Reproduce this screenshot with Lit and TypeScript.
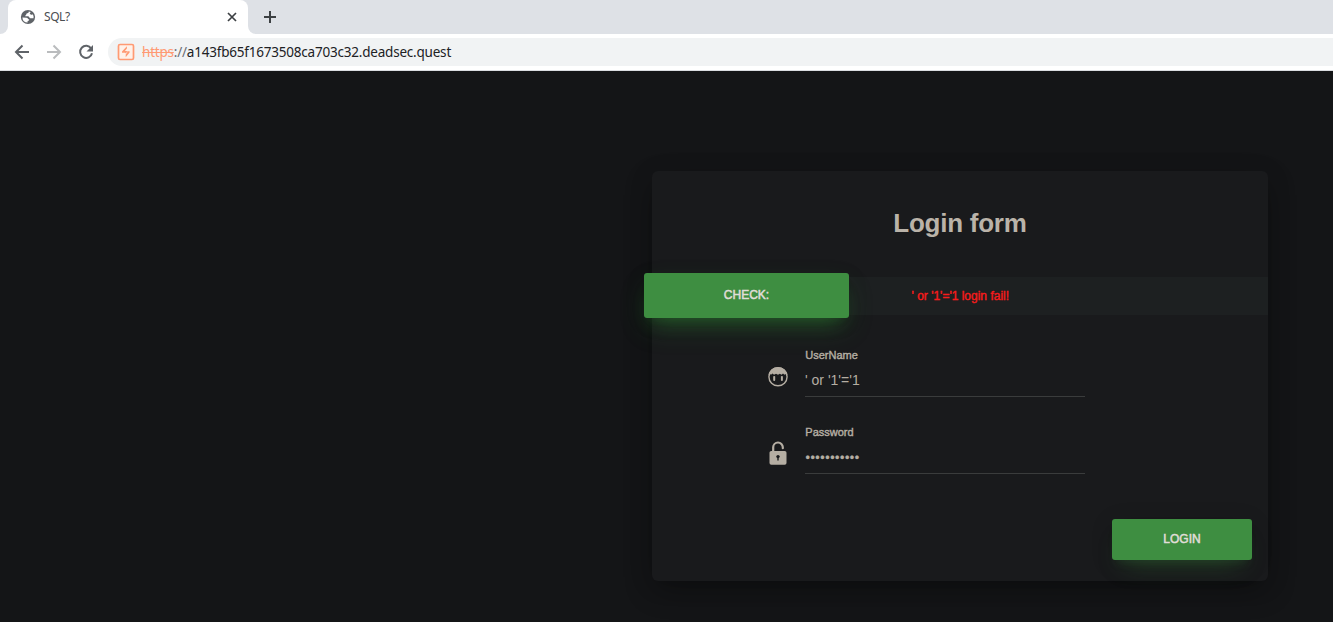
import { LitElement, html, css, svg } from "lit";
import { customElement } from "lit/decorators.js";

@customElement("browser-chrome")
class BrowserChrome extends LitElement {
  static styles = css`
    :host { display: block; height: 71px; background: #fff; box-sizing: border-box; border-bottom: 1px solid #dadce0; font-family: "Noto Sans", sans-serif; }
    .strip { height: 34px; background: #dee1e6; display: flex; align-items: flex-start; }
    .edge { width: 8px; height: 34px; background: #fff; }
    .edge i { display: block; height: 34px; background: #dee1e6; }
    .left i { border-bottom-right-radius: 8px; }
    .right i { border-bottom-left-radius: 8px; }
    .tab { width: 240px; height: 34px; box-sizing: border-box; padding: 0 10px 0 12px; display: flex; align-items: center; background: #fff; border-radius: 8px 8px 0 0; }
    .title { flex: 1; margin-left: 8px; font-size: 12px; letter-spacing: -0.45px; color: #4a4d51; line-height: 34px; }
    .plus { margin: 10px 0 0 7px; }
    .bar { height: 36px; display: flex; align-items: center; }
    .nav { display: flex; gap: 16px; padding-left: 14px; }
    .address { flex: 1; height: 28px; margin-left: 14px; background: #f1f3f4; border-radius: 14px 0 0 14px; display: flex; align-items: center; padding-left: 9px; box-sizing: border-box; }
    .url { margin-left: 7px; font-size: 13.5px; line-height: 28px; color: #202124; letter-spacing: -0.21px; white-space: pre; }
    .bad { color: #ff9a73; text-decoration: line-through; }
    .sep { color: #6a6e73; }
    svg { display: block; flex: none; }
  `;
  render() {
    return html`
      <div class="strip">
        <div class="edge left"><i></i></div>
        <div class="tab">
          <svg width="16" height="16" viewBox="0 0 16 16">
            <circle cx="8" cy="8" r="7.1" fill="#5f6368" />
            <path d="M8.8 2.5C8.800 4 7.600 4.300 6.600 4.600 6.600 6 5.200 6 5.200 7.300H8C9.200 7.300 9.300 9 10.200 9.300H13.500A5.700 5.700 0 0 0 12.800 5.200C11.500 6.300 10 5.600 9.800 4.600 9.700 3.800 10.800 3.600 10.500 3ZM2.400 8.400A5.600 5.600 0 0 0 7.600 13.600V12C9 12 9.200 11.400 9.200 10.600 8 10.600 8 9 6.600 8.800Z" fill="#fff" />
          </svg>
          <span class="title">SQL?</span>
          <svg width="12" height="12" viewBox="0 0 12 12"><path d="m2 2 8 8m0-8-8 8" stroke="#3c4043" stroke-width="1.7" /></svg>
        </div>
        <div class="edge right"><i></i></div>
        <svg class="plus" width="14" height="14" viewBox="0 0 14 14"><path d="M7 1v12M1 7h12" stroke="#3c4043" stroke-width="2" /></svg>
      </div>
      <div class="bar">
        <div class="nav">
          <svg width="16" height="16" viewBox="0 0 16 16"><path d="M15 8H2.2M8.5 1.5 2 8l6.5 6.5" fill="none" stroke="#5f6368" stroke-width="2" /></svg>
          <svg width="16" height="16" viewBox="0 0 16 16"><path d="M1 8h12.8M7.5 1.5 14 8l-6.5 6.5" fill="none" stroke="#babcbe" stroke-width="2" /></svg>
          <svg width="16" height="16" viewBox="0 0 16 16"><path d="M13.2 4.6A6 6 0 1 0 14 9.2" fill="none" stroke="#5f6368" stroke-width="2" /><path d="M15 1v6.5H8.5Z" fill="#5f6368" /></svg>
        </div>
        <div class="address">
          <svg width="18" height="18" viewBox="0 0 18 18">
            <rect x="1.5" y="1.5" width="15" height="15" rx="1.5" fill="#fff1e9" stroke="#ff9a73" stroke-width="1.7" />
            <path d="M9.900 3.200 5 8.600V9.700H8.400V10.600L9.900 9.300V8H7.900L9.900 5.400ZM8.700 14.200 12.600 9.600V8.300H10.200V9.400L8.700 11.600Z" fill="#ff9a73" />
          </svg>
          <span class="url"><span class="bad">https</span><span class="sep">://</span>a143fb65f1673508ca703c32.deadsec.quest</span>
        </div>
      </div>
    `;
  }
}

const userIcon = svg`<svg width="22" height="22" viewBox="0 0 22 22">
  <circle cx="11" cy="10.700" r="9.100" fill="none" stroke="#b5aea3" stroke-width="1.400" />
  <path d="M1.500 9.200A9.600 9.600 0 0 1 20.500 9.200L18.500 7.900 17.500 8.700 16 7.500 14.500 8.700 12.800 7.700 11 8.700 9 7.700 7 8.700 5.500 7.500 4 8.700 3.200 7.900Z" fill="#b5aea3" />
  <rect x="6.200" y="9.900" width="2" height="5" rx=".9" fill="#b5aea3" />
  <rect x="13.900" y="9.900" width="2" height="5" rx=".9" fill="#b5aea3" />
</svg>`;

const lockIcon = svg`<svg width="22" height="24" viewBox="0 0 22 24">
  <path d="M6.200 10.500V6.300a4.800 4.800 0 0 1 9.600 0V7.200" fill="none" stroke="#b5aea3" stroke-width="2.200" stroke-linecap="round" />
  <rect x="2.500" y="10" width="17" height="13.700" rx="1.800" fill="#b5aea3" />
  <circle cx="11" cy="15.600" r="1.700" fill="#191a1c" />
  <path d="M10.300 16h1.400v3.600h-1.400Z" fill="#191a1c" />
</svg>`;

@customElement("login-card")
class LoginCard extends LitElement {
  static styles = css`
    :host { display: flex; flex-direction: column; box-sizing: border-box; width: 616px; height: 410px; background: #191a1c; border-radius: 6px; box-shadow: 0 10px 30px -4px rgba(0, 0, 0, 0.35), 0 4px 25px 0 rgba(0, 0, 0, 0.12); color: #b5aea3; }
    h2 { margin: 36px 0 0; font-size: 26px; line-height: 32px; font-weight: 700; letter-spacing: -0.25px; text-align: center; color: #bab3a9; }
    .status { display: flex; align-items: flex-start; height: 38px; margin-top: 38px; background: #1d2021; }
    .btn { background: #3e8e41; border-radius: 3px; color: #e0ddd8; font-size: 12px; text-align: center; -webkit-text-stroke: 0.5px; box-shadow: 0 14px 26px -12px rgba(62, 142, 65, 0.42), 0 4px 23px 0 rgba(0, 0, 0, 0.12), 0 8px 10px -5px rgba(62, 142, 65, 0.2); }
    .check { width: 205px; height: 45px; line-height: 44px; margin: -4px 0 0 -8px; flex: none; box-shadow: 0 12px 20px -10px rgba(50, 142, 55, 0.4), 0 4px 20px 0 rgba(0, 0, 0, 0.12), 0 7px 8px -5px rgba(50, 142, 55, 0.12), 0 12px 28px -4px rgba(50, 142, 55, 0.3); }
    .msg { margin-left: 62.5px; font-size: 12px; line-height: 38px; color: #f81b1b; -webkit-text-stroke: 0.4px; white-space: pre; }
    .row { display: flex; align-items: flex-start; margin-left: 115px; height: 50px; }
    .first { margin-top: 32px; }
    .second { margin-top: 27px; }
    .icon { width: 22px; display: flex; }
    .user { margin-top: 19px; }
    .lock { margin-top: 17px; }
    .field { margin-left: 16px; width: 280px; height: 50px; box-sizing: border-box; border-bottom: 1px solid #3a3c3c; }
    .label { font-size: 11px; line-height: 17px; -webkit-text-stroke: 0.4px; padding-left: 0.3px; }
    .value { font-size: 14px; line-height: 20px; margin-top: 6px; white-space: pre; }
    .dots { font-size: 12.5px; letter-spacing: 0.55px; margin-top: 7px; padding-left: 0.5px; -webkit-text-stroke: 0.3px; }
    .login { width: 140px; height: 41px; line-height: 40px; align-self: flex-end; margin: 45px 16px 0 0; }
  `;
  render() {
    return html`
      <h2>Login form</h2>
      <div class="status"><div class="btn check">CHECK:</div><div class="msg">' or '1'='1 login fail!</div></div>
      <div class="row first">
        <div class="icon user">${userIcon}</div>
        <div class="field"><div class="label">UserName</div><div class="value">' or '1'='1</div></div>
      </div>
      <div class="row second">
        <div class="icon lock">${lockIcon}</div>
        <div class="field"><div class="label">Password</div><div class="value dots">•••••••••••</div></div>
      </div>
      <div class="btn login">LOGIN</div>
    `;
  }
}

@customElement("app-root")
class AppRoot extends LitElement {
  static styles = css`
    :host { display: flex; flex-direction: column; height: 622px; background: #141517; overflow: hidden; font-family: "Liberation Sans", Arial, sans-serif; }
    main { display: flex; justify-content: flex-end; padding: 100px 65px 0 0; }
  `;
  render() {
    return html`<browser-chrome></browser-chrome><main><login-card></login-card></main>`;
  }
}
